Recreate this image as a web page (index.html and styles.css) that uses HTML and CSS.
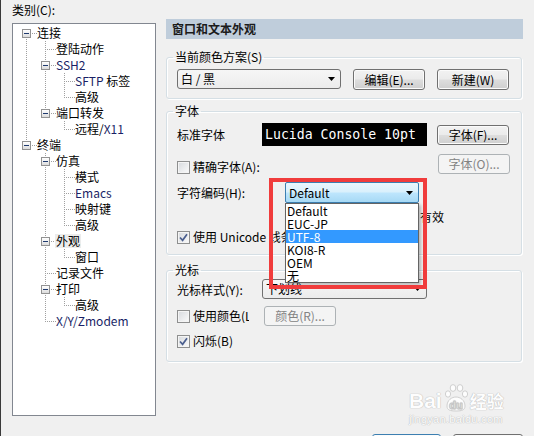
FILE: index.html
```html
<!DOCTYPE html>
<html>
<head>
<meta charset="utf-8">
<link rel="stylesheet" href="styles.css">
</head>
<body>
<div class="dialog">
  <div class="left">
    <div class="cat-label">类别(C):</div>
    <div class="tree">
      <div class="row"><span class="c first"><span class="box"></span></span><span class="t">连接</span></div>
      <div class="row"><span class="c v"></span><span class="c tee"></span><span class="t">登陆动作</span></div>
      <div class="row"><span class="c v"></span><span class="c tee"><span class="box"></span></span><span class="t lat">SSH2</span></div>
      <div class="row"><span class="c v"></span><span class="c v"></span><span class="c tee"></span><span class="t"><span class="lat">SFTP</span> 标签</span></div>
      <div class="row"><span class="c v"></span><span class="c v"></span><span class="c ell"></span><span class="t">高级</span></div>
      <div class="row"><span class="c v"></span><span class="c ell"><span class="box"></span></span><span class="t">端口转发</span></div>
      <div class="row"><span class="c v"></span><span class="c"></span><span class="c ell"></span><span class="t">远程/<span class="lat">X11</span></span></div>
      <div class="row"><span class="c ell"><span class="box"></span></span><span class="t">终端</span></div>
      <div class="row"><span class="c"></span><span class="c tee"><span class="box"></span></span><span class="t">仿真</span></div>
      <div class="row"><span class="c"></span><span class="c v"></span><span class="c tee"></span><span class="t">模式</span></div>
      <div class="row"><span class="c"></span><span class="c v"></span><span class="c tee"></span><span class="t lat">Emacs</span></div>
      <div class="row"><span class="c"></span><span class="c v"></span><span class="c tee"></span><span class="t">映射键</span></div>
      <div class="row"><span class="c"></span><span class="c v"></span><span class="c ell"></span><span class="t">高级</span></div>
      <div class="row"><span class="c"></span><span class="c tee"><span class="box"></span></span><span class="t sel">外观</span></div>
      <div class="row"><span class="c"></span><span class="c v"></span><span class="c ell"></span><span class="t">窗口</span></div>
      <div class="row"><span class="c"></span><span class="c tee"></span><span class="t">记录文件</span></div>
      <div class="row"><span class="c"></span><span class="c tee"><span class="box"></span></span><span class="t">打印</span></div>
      <div class="row"><span class="c"></span><span class="c v"></span><span class="c ell"></span><span class="t">高级</span></div>
      <div class="row"><span class="c"></span><span class="c ell"></span><span class="t lat">X/Y/Zmodem</span></div>
    </div>
  </div>

  <div class="right">
    <div class="header">窗口和文本外观</div>

    <fieldset class="group g1">
      <legend>当前颜色方案(S)</legend>
      <div class="line scheme-line">
        <div class="combo scheme"><span class="ctext">白 / 黑</span><svg class="arrow" width="7" height="4" viewBox="0 0 7 4"><path d="M0 0h7L3.5 4z"/></svg></div>
        <button class="btn">编辑(E)...</button>
        <button class="btn">新建(W)</button>
      </div>
    </fieldset>

    <fieldset class="group g2">
      <legend>字体</legend>
      <div class="line l-font">
        <span class="lbl w85">标准字体</span>
        <div class="fontbox">Lucida Console 10pt</div>
        <button class="btn">字体(F)...</button>
      </div>
      <div class="line l-exact">
        <span class="chk"><span class="cb"></span><span>精确字体(A):</span></span>
        <button class="btn disabled">字体(O)...</button>
      </div>
      <div class="line l-enc">
        <span class="lbl w108">字符编码(H):</span>
        <div class="combo hot">
          <span class="ctext">Default</span><svg class="arrow" width="7" height="4" viewBox="0 0 7 4"><path d="M0 0h7L3.5 4z"/></svg>
          <div class="droplist">
            <div class="opt">Default</div>
            <div class="opt">EUC-JP</div>
            <div class="opt on">UTF-8</div>
            <div class="opt">KOI8-R</div>
            <div class="opt">OEM</div>
            <div class="opt">无</div>
          </div>
          <div class="redmark"></div>
        </div>
      </div>
      <div class="line l-hidden"><span class="tail">有效</span></div>
      <div class="line l-uni">
        <span class="chk"><span class="cb checked"><svg width="11" height="11" viewBox="0 0 11 11"><path d="M2 5.5l2.6 2.8L9 2.3" fill="none" stroke="#4a5e8e" stroke-width="1.7"/></svg></span><span>使用 Unicode 线条绘制字符</span></span>
      </div>
    </fieldset>

    <fieldset class="group g3">
      <legend>光标</legend>
      <div class="line l-cur">
        <span class="lbl w85">光标样式(Y):</span>
        <div class="combo cursor"><span class="ctext">下划线</span><svg class="arrow" width="7" height="4" viewBox="0 0 7 4"><path d="M0 0h7L3.5 4z"/></svg></div>
      </div>
      <div class="line l-color">
        <span class="chk w87"><span class="cb"></span><span class="clip">使用颜色(L)</span></span>
        <button class="btn disabled small">颜色(R)...</button>
      </div>
      <div class="line l-blink">
        <span class="chk"><span class="cb checked"><svg width="11" height="11" viewBox="0 0 11 11"><path d="M2 5.5l2.6 2.8L9 2.3" fill="none" stroke="#4a5e8e" stroke-width="1.7"/></svg></span><span>闪烁(B)</span></span>
      </div>
    </fieldset>

    <div class="footer">
      <button class="btn default" aria-label="确定"></button>
      <button class="btn" aria-label="取消"></button>
    </div>
  </div>
</div>

<div class="watermark">
  <div class="wm1"><span class="bai">Bai</span><svg class="paw" width="26" height="30" viewBox="0 0 26 30"><g fill="#fdfdfd" stroke="#cfcfcf" stroke-width="1"><ellipse cx="5" cy="11" rx="2.6" ry="3.2"/><ellipse cx="10" cy="5" rx="2.8" ry="3.4"/><ellipse cx="17" cy="5" rx="2.8" ry="3.4"/><ellipse cx="22" cy="11" rx="2.6" ry="3.2"/><path d="M4 23c0-6 5-9 9-9s9 3 9 9c0 4-3 5-9 5s-9-1-9-5z"/></g><text x="13" y="26" text-anchor="middle" font-family="Liberation Sans" font-weight="bold" font-size="11" fill="#fdfdfd" stroke="#c8c8c8" stroke-width="0.4">du</text></svg><span class="jy">经验</span></div>
  <div class="wm2">jingyan.baidu.com</div>
</div>
</body>
</html>
```

FILE: styles.css
```css
* { box-sizing: border-box; }
html, body { margin: 0; padding: 0; }
body {
  width: 534px;
  height: 436px;
  overflow: hidden;
  position: relative;
  background: #f0f0f0;
  border-left: 1px solid #3a3a3a;
  font-family: "Noto Sans CJK SC", "Noto Sans", sans-serif;
  font-size: 12px;
  color: #000;
  --vd: repeating-linear-gradient(to bottom, #a0a0a0 0 1px, transparent 1px 2px);
  --hd: repeating-linear-gradient(to right, #a0a0a0 0 1px, transparent 1px 2px);
}
button { font: inherit; color: inherit; margin: 0; }

.dialog { display: flex; gap: 10px; padding-left: 11px; }

/* ---------- left tree ---------- */
.left { width: 144px; flex: none; display: flex; flex-direction: column; }
.cat-label { height: 16px; line-height: 16px; margin-top: 2px; margin-bottom: 5px; }
.tree {
  height: 393px;
  border: 1px solid #828790;
  background: #fff;
  padding: 1px 0 0 5px;
}
.row { display: flex; align-items: center; height: 16px; }
.c { display: block; flex: none; width: 19px; height: 16px; }
.v { background: var(--vd) 8px 0 / 1px 16px no-repeat; }
.tee { background: var(--vd) 8px 0 / 1px 16px no-repeat, var(--hd) 10px 8px / 9px 1px no-repeat; }
.ell { background: var(--vd) 8px 0 / 1px 9px no-repeat, var(--hd) 10px 8px / 9px 1px no-repeat; }
.first { background: var(--vd) 8px 8px / 1px 8px no-repeat, var(--hd) 10px 8px / 9px 1px no-repeat; }
.box {
  display: flex;
  align-items: center;
  justify-content: center;
  width: 9px;
  height: 9px;
  margin: 4px 0 0 4px;
  border: 1px solid #929292;
  background: linear-gradient(#ffffff, #dcdcdc);
}
.box::before { content: ""; width: 5px; height: 1px; background: #1f3a6e; }
.t { line-height: 14px; height: 14px; padding: 0 1px; margin-left: -1px; white-space: nowrap; }
.t.sel { background: #ececec; }
.lat { color: #1a1f66; }

/* ---------- right panel ---------- */
.right { width: 357px; flex: none; padding-top: 19px; }
.header {
  height: 20px;
  line-height: 20px;
  background: #bfcddb;
  color: #1b1b1b;
  font-weight: bold;
  padding-left: 6px;
}
.group {
  margin: 0 1px 0 0;
  min-width: 0;
  border: 1px solid #d5dfe5;
  border-radius: 3px;
  padding: 0 11px 0 10px;
  box-shadow: 1px 1px 0 #ffffff, inset 1px 1px 0 #ffffff;
}
.group legend { padding: 0 2px; margin-left: -4px; height: 14px; line-height: 14px; }
.g1 { margin-top: 11px; padding-bottom: 8px; }
.g2 { margin-top: 5px; padding-bottom: 8px; }
.g3 { margin-top: 8px; padding-bottom: 11px; }

.line { display: flex; align-items: center; }
.lbl { flex: none; white-space: nowrap; }
.w85 { width: 85px; }
.w108 { width: 108px; }

.scheme-line { margin-top: 5px; gap: 12px; align-items: flex-start; }

.btn {
  width: 72px;
  height: 21px;
  padding: 0;
  border: 1px solid #707070;
  border-radius: 3px;
  background: linear-gradient(#f2f2f2 0%, #ebebeb 48%, #dddddd 52%, #cfcfcf 100%);
  box-shadow: inset 0 0 0 1px #fbfbfb;
  line-height: 18px;
  text-align: center;
  white-space: nowrap;
}
.btn.disabled {
  height: 20px;
  border-color: #adb2b5;
  background: #f4f4f4;
  box-shadow: none;
  color: #838383;
}
.btn.default { border-color: #3c7fb1; width: 71px; }

.combo {
  position: relative;
  display: flex;
  align-items: center;
  height: 20px;
  border: 1px solid #707070;
  border-radius: 3px;
  background: linear-gradient(#f2f2f2 0%, #ebebeb 48%, #dddddd 52%, #cfcfcf 100%);
  padding-left: 3px;
}
.combo .ctext { flex: 1; line-height: 16px; white-space: nowrap; }
.combo .arrow { flex: none; margin-right: 5px; }
.scheme { width: 164px; background: linear-gradient(#f6f6f6, #ececec); }
.cursor { width: 165px; background: linear-gradient(#f6f6f6, #ececec); }

.l-font { margin-top: 5px; height: 23px; }
.l-font .btn { margin-left: 10px; height: 20px; line-height: 17px; }
.fontbox {
  width: 165px;
  height: 23px;
  background: #000;
  color: #fff;
  font-family: "DejaVu Sans Mono", "Liberation Mono", monospace;
  font-size: 13.2px;
  line-height: 23px;
  padding-left: 3px;
  white-space: nowrap;
}

.l-exact { margin-top: 7px; height: 21px; align-items: flex-end; justify-content: space-between; }
.chk { display: flex; align-items: center; gap: 3px; height: 14px; line-height: 14px; white-space: nowrap; }
.cb {
  flex: none;
  width: 13px;
  height: 13px;
  border: 1px solid #8e8f8f;
  background: linear-gradient(135deg, #d6d9dd, #fbfbfb);
  box-shadow: inset 0 0 0 1px #f4f4f4;
  display: flex;
  align-items: center;
  justify-content: center;
}

.l-enc { margin-top: 8px; height: 21px; }
.combo.hot {
  width: 134px;
  height: 21px;
  border-color: #3c7fb1;
  border-radius: 2px;
  background: linear-gradient(#eaf6fd 0%, #d9f0fc 48%, #bee6fd 52%, #a7d9f5 100%);
}
.droplist {
  position: absolute;
  z-index: 5;
  top: 20px;
  left: -1px;
  width: 134px;
  height: 80px;
  border: 1px solid #646464;
  background: #fff;
  box-shadow: 2px 2px 3px rgba(0, 0, 0, 0.25);
}
.opt { height: 13px; line-height: 13px; padding-left: 1px; white-space: nowrap; }
.opt.on { background: #3399ff; color: #fff; }
.redmark {
  position: absolute;
  z-index: 6;
  left: -17px;
  top: -5px;
  width: 158px;
  height: 111px;
  border: 4px solid #f03c3c;
}

.l-hidden { margin-top: 5px; height: 18px; }
.tail { margin-left: 243px; line-height: 18px; }
.l-uni { margin-top: 2px; height: 18px; }

.l-cur { margin-top: 2px; height: 20px; }
.l-color { margin-top: 7px; height: 20px; }
.w87 { width: 87px; }
.clip { width: 56px; overflow: hidden; }
.btn.small { width: 72px; }
.l-blink { margin-top: 6px; height: 18px; }

.footer { display: flex; gap: 12px; margin-top: 72px; padding-left: 206px; }

/* ---------- watermark ---------- */
.watermark {
  position: absolute;
  left: 408px;
  top: 383px;
  color: #fdfdfd;
  text-shadow: 0 0 1px #b8b8b8, 0 0 1px #b8b8b8;
}
.wm1 { display: flex; align-items: flex-end; height: 30px; }
.bai { font-family: "Liberation Sans", sans-serif; font-weight: bold; font-size: 21px; line-height: 24px; }
.paw { margin: 0 1px; }
.jy { font-size: 17px; line-height: 24px; font-weight: bold; }
.wm2 { font-family: "Liberation Sans", sans-serif; font-size: 11px; line-height: 12px; letter-spacing: 0.3px; }
```
